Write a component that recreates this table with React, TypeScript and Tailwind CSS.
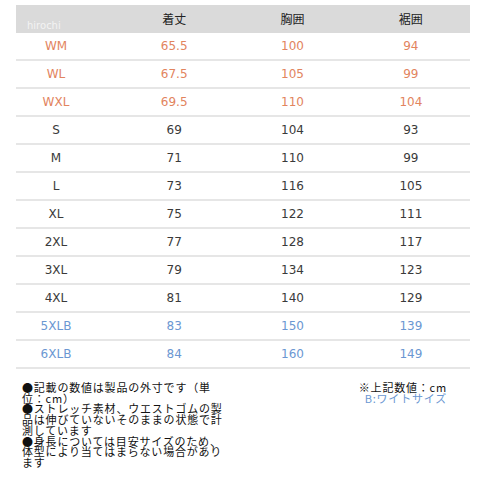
import React from "react";

type Row = { s: string; a: string; b: string; c: string; t: "o" | "d" | "b" };

const rows: Row[] = [
  { s: "WM", a: "65.5", b: "100", c: "94", t: "o" },
  { s: "WL", a: "67.5", b: "105", c: "99", t: "o" },
  { s: "WXL", a: "69.5", b: "110", c: "104", t: "o" },
  { s: "S", a: "69", b: "104", c: "93", t: "d" },
  { s: "M", a: "71", b: "110", c: "99", t: "d" },
  { s: "L", a: "73", b: "116", c: "105", t: "d" },
  { s: "XL", a: "75", b: "122", c: "111", t: "d" },
  { s: "2XL", a: "77", b: "128", c: "117", t: "d" },
  { s: "3XL", a: "79", b: "134", c: "123", t: "d" },
  { s: "4XL", a: "81", b: "140", c: "129", t: "d" },
  { s: "5XLB", a: "83", b: "150", c: "139", t: "b" },
  { s: "6XLB", a: "84", b: "160", c: "149", t: "b" },
];

const colorFor = (t: Row["t"]) =>
  t === "o" ? "text-[#e2845e]" : t === "b" ? "text-[#6b97d2]" : "text-[#3a3a3a]";

export default function App() {
  return (
    <div
      className="w-[480px] h-[480px] bg-white overflow-hidden"
      style={{ fontFamily: '"DejaVu Sans", "Noto Sans CJK JP", sans-serif' }}
    >
      <div className="ml-[16px] mt-[5px] w-[454px]">
        <div className="relative grid grid-cols-[99px_1fr_1fr_1fr] h-[28px] bg-[#dadada] items-center text-[12px] text-[#222222]">
          <span className="absolute left-[11px] top-[16px] text-[10px] leading-[10px] text-white/70">
            hirochi
          </span>
          <div className="pr-[19px]"></div>
          <div className="text-center" style={{ fontFamily: '"Noto Sans CJK JP", sans-serif' }}>着丈</div>
          <div className="text-center" style={{ fontFamily: '"Noto Sans CJK JP", sans-serif' }}>胸囲</div>
          <div className="text-center" style={{ fontFamily: '"Noto Sans CJK JP", sans-serif' }}>裾囲</div>
        </div>
        {rows.map((r) => (
          <div
            key={r.s}
            className={`grid grid-cols-[99px_1fr_1fr_1fr] h-[28px] items-center border-b-2 border-[#e6e6e6] text-[12px] ${colorFor(r.t)}`}
          >
            <div className="text-center pr-[19px]">{r.s}</div>
            <div className="text-center">{r.a}</div>
            <div className="text-center">{r.b}</div>
            <div className="text-center">{r.c}</div>
          </div>
        ))}
      </div>
      <div
        className="flex justify-between mt-[13px] pl-[22px] pr-[33px] text-[11px] tracking-[0.8px] leading-[10.7px] text-[#111111]"
        style={{ fontFamily: '"Noto Sans CJK JP", sans-serif' }}
      >
        <div className="whitespace-nowrap">
          <div>●記載の数値は製品の外寸です（単</div>
          <div>位：cm）</div>
          <div>●ストレッチ素材、ウエストゴムの製</div>
          <div>品は伸びていないそのままの状態で計</div>
          <div>測しています</div>
          <div>●身長については目安サイズのため、</div>
          <div>体型により当てはまらない場合があり</div>
          <div>ます</div>
        </div>
        <div className="text-right whitespace-nowrap">
          <div>※上記数値：cm</div>
          <div className="text-[#6b97d2]">B:ワイトサイズ</div>
        </div>
      </div>
    </div>
  );
}
